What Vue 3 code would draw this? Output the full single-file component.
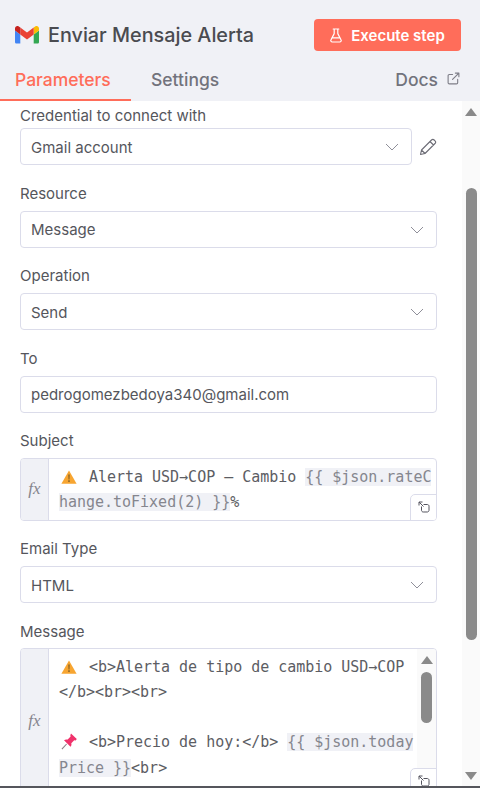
<script setup>
const fields = [
  { label: 'Resource', value: 'Message' },
  { label: 'Operation', value: 'Send' }
]
</script>

<template>
  <div class="panel">
    <header class="head">
      <div class="title-row">
        <svg class="gmail" width="24" height="18" viewBox="0 0 24 18">
          <path d="M1.6 17.5h3.7V8.6L0 4.6v11.3c0 .9.7 1.6 1.6 1.6z" fill="#4285f4" />
          <path d="M18.7 17.5h3.7c.9 0 1.6-.7 1.6-1.6V4.6l-5.3 4z" fill="#34a853" />
          <path d="M18.7 1.6v7L24 4.6V2.4c0-2-2.2-3.1-3.8-1.900z" fill="#fbbc04" />
          <path d="M5.3 8.6v-7L12 6.600l6.700-5v7L12 13.600z" fill="#ea4335" />
          <path d="M0 2.400v2.200l5.300 4v-7L3.800 .5C2.200-.7 0 .4 0 2.400z" fill="#c5221f" />
        </svg>
        <span class="title">Enviar Mensaje Alerta</span>
        <button class="run" type="button">
          <svg width="12" height="15" viewBox="0 0 12 15" fill="none" stroke="#fff" stroke-width="1.200" stroke-linejoin="round" stroke-linecap="round">
            <path d="M3.200 1h5.600M4.200 1v4.600L1 11.800c-.6 1.100.1 2.200 1.300 2.200h7.400c1.200 0 1.900-1.100 1.300-2.200L7.800 5.600V1M2.800 9.800h6.400" />
          </svg>
          Execute step
        </button>
      </div>
      <nav class="tabs">
        <a class="tab on">Parameters</a>
        <a class="tab">Settings</a>
        <a class="docs">
          Docs
          <svg width="13" height="13" viewBox="0 0 14 14" fill="none" stroke="#7d7d87" stroke-width="1.200" stroke-linecap="round" stroke-linejoin="round">
            <path d="M11.500 8v3.500c0 .8-.6 1.300-1.300 1.300H2.500c-.7 0-1.300-.5-1.300-1.300V4c0-.7.600-1.300 1.300-1.300H6M9 1.200h3.800V5M12.800 1.200L6 8" />
          </svg>
        </a>
      </nav>
    </header>

    <div class="body">
      <main class="form">
        <div class="field first">
          <label>Credential to connect with</label>
          <div class="cred">
            <div class="select">
              <span>Gmail account</span>
              <svg class="chev" width="14" height="8" viewBox="0 0 14 8" fill="none" stroke="#8f8f99" stroke-width="1"><path d="M1 1l6 6 6-6" /></svg>
            </div>
            <svg class="pencil" width="18" height="18" viewBox="0 0 18 18" fill="none" stroke="#6d6d76" stroke-width="1.100" stroke-linejoin="round">
              <path d="M1.500 16.500l1-4.500L12.500 2c.8-.8 1.900-.8 2.700 0l.8.800c.8.8.8 1.900 0 2.700L6 15.500zM2.500 12L6 15.500M11 3.500l3.500 3.500" />
            </svg>
          </div>
        </div>

        <div v-for="f in fields" :key="f.label" class="field">
          <label>{{ f.label }}</label>
          <div class="select">
            <span>{{ f.value }}</span>
            <svg class="chev" width="14" height="8" viewBox="0 0 14 8" fill="none" stroke="#8f8f99" stroke-width="1"><path d="M1 1l6 6 6-6" /></svg>
          </div>
        </div>

        <div class="field">
          <label>To</label>
          <div class="select"><span>pedrogomezbedoya340@gmail.com</span></div>
        </div>

        <div class="field">
          <label>Subject</label>
          <div class="expr subject">
            <div class="fx">fx</div>
            <div class="code">
              <div class="ln">
                <svg class="emoji" width="16" height="14" viewBox="0 0 16 14"><path d="M8 .5l7.600 13.200H.4z" fill="#f7a531" /><path d="M7.400 4.500h1.200l-.2 5h-.8zM7.400 10.300h1.200v1.600H7.400z" fill="#6b5326" /></svg><span class="gap">Alerta USD→COP — Cambio <em>{{ '{{ $json.rateC' }}</em></span>
              </div>
              <div class="ln"><em>hange.toFixed(2) }}</em>%</div>
            </div>
            <div class="grip">
              <svg width="12" height="12" viewBox="0 0 12 12" fill="none" stroke="#55555f" stroke-width="1"><path d="M1 4.500V1h3.500M1 1l4.500 4.500M5.500 3.500h3.800c.9 0 1.700.7 1.700 1.700v4.100c0 .9-.8 1.700-1.700 1.700H5.200c-.9 0-1.700-.8-1.700-1.700V5.500" /></svg>
            </div>
          </div>
        </div>

        <div class="field">
          <label>Email Type</label>
          <div class="select">
            <span>HTML</span>
            <svg class="chev" width="14" height="8" viewBox="0 0 14 8" fill="none" stroke="#8f8f99" stroke-width="1"><path d="M1 1l6 6 6-6" /></svg>
          </div>
        </div>

        <div class="field">
          <label>Message</label>
          <div class="expr message">
            <div class="fx">fx</div>
            <div class="code">
              <div class="ln">
                <svg class="emoji" width="16" height="14" viewBox="0 0 16 14"><path d="M8 .5l7.600 13.200H.4z" fill="#f7a531" /><path d="M7.400 4.500h1.200l-.2 5h-.8zM7.400 10.300h1.200v1.600H7.400z" fill="#6b5326" /></svg><span class="gap">&lt;b&gt;Alerta de tipo de cambio USD→COP</span>
              </div>
              <div class="ln">&lt;/b&gt;&lt;br&gt;&lt;br&gt;</div>
              <div class="ln">&nbsp;</div>
              <div class="ln">
                <svg class="emoji pin" width="16" height="17" viewBox="0 0 16 17"><path d="M10 .5l5.800 5.600-1.100 1.300-1.500-.2-2.900 3c.4 1.400.1 2.700-.8 3.600L3 7.300c1-.9 2.300-1.100 3.700-.7l2.900-3-.3-1.400z" fill="#f0326b" /><path d="M5.600 11L.9 16.200" stroke="#8a7f86" stroke-width="1.100" /></svg><span class="gap">&lt;b&gt;Precio de hoy:&lt;/b&gt; <em>{{ '{{ $json.today' }}</em></span>
              </div>
              <div class="ln"><em>Price }}</em>&lt;br&gt;</div>
            </div>
            <div class="mini-bar">
              <i class="up"></i>
              <b></b>
            </div>
            <div class="grip">
              <svg width="12" height="12" viewBox="0 0 12 12" fill="none" stroke="#55555f" stroke-width="1"><path d="M1 4.500V1h3.500M1 1l4.500 4.500M5.500 3.500h3.800c.9 0 1.700.7 1.700 1.700v4.100c0 .9-.8 1.700-1.700 1.700H5.200c-.9 0-1.700-.8-1.700-1.700V5.500" /></svg>
            </div>
          </div>
        </div>
      </main>

      <aside class="bar">
        <i class="up"></i>
        <b></b>
        <i class="down"></i>
      </aside>
    </div>
    <div class="edge"></div>
  </div>
</template>

<style>
html, body { margin: 0; background: #fff; overflow: hidden; }
</style>

<style scoped>
.panel {
  width: 480px;
  height: 788px;
  display: flex;
  flex-direction: column;
  overflow: hidden;
  background: #fff;
  font-family: Inter, "Liberation Sans", sans-serif;
  color: #555;
}

.head {
  flex: none;
  height: 101px;
  background: #f0f1f6;
  display: flex;
  flex-direction: column;
}
.title-row {
  display: flex;
  align-items: center;
  height: 62px;
  padding: 8px 19px 0 15px;
  box-sizing: border-box;
}
.gmail { flex: none; margin-right: 9px; }
.title { flex: 1; font-size: 19.800px; font-weight: 500; color: #4a4b50; }
.run {
  width: 147px;
  height: 32px;
  border: none;
  border-radius: 4px;
  background: #ff6d5a;
  color: #fff;
  font: 600 15px Inter, "Liberation Sans", sans-serif;
  display: flex;
  align-items: center;
  justify-content: center;
  gap: 9px;
  padding: 0;
}

.tabs {
  display: flex;
  align-items: flex-start;
  height: 39px;
  font-size: 17.500px;
  font-weight: 500;
}
.tab {
  height: 37px;
  padding: 7px 20px 0 20px;
  box-sizing: border-box;
  color: #72737c;
}
.tab.on {
  width: 131px;
  padding-left: 15px;
  padding-right: 0;
  color: #ff6d5a;
  border-bottom: 2px solid #ff6d5a;
  height: 39px;
}
.docs {
  margin-left: auto;
  padding: 7px 20px 0 0;
  color: #72737c;
  display: flex;
  gap: 9px;
  align-items: flex-start;
}
.docs svg { margin-top: 3px; }

.body { flex: 1; min-height: 0; display: flex; }
.form { flex: 1; min-width: 0; padding: 4px 25px 0 20px; overflow: hidden; }

.field { margin-top: 17.500px; }
.field.first { margin-top: 0; }
.field.first label { margin-bottom: 1px; }
label {
  display: block;
  font-size: 15px;
  line-height: 22px;
  margin-bottom: 6px;
  color: #55565c;
}
.cred { display: flex; align-items: center; }
.cred .select { flex: 1; }
.pencil { flex: none; margin: 0 0 0 7px; width: 18px; }
.select {
  height: 37px;
  box-sizing: border-box;
  border: 1px solid #dbdcea;
  border-radius: 4px;
  padding: 1px 12px 0 10px;
  display: flex;
  align-items: center;
  justify-content: space-between;
  font-size: 15px;
  color: #55565c;
  background: #fff;
}

.expr {
  position: relative;
  display: flex;
  box-sizing: border-box;
  border: 1px solid #dbdcea;
  border-radius: 4px;
  overflow: hidden;
}
.subject { height: 62.500px; }
.message { height: 147px; margin-top: -1px; }
.fx {
  flex: none;
  width: 27px;
  background: #f0f1f6;
  border-right: 1px solid #dbdcea;
  display: flex;
  align-items: center;
  justify-content: center;
  font: italic 17px "Liberation Serif", serif;
  color: #85858d;
}
.code {
  flex: 1;
  min-width: 0;
  padding: 6px 0 0 10px;
  font-family: "DejaVu Sans Mono", "Liberation Mono", monospace;
  font-size: 15px;
  letter-spacing: -.02px;
  line-height: 25.300px;
  color: #5c5d63;
  white-space: pre;
  overflow: hidden;
}
.ln { height: 25.300px; }
em { font-style: normal; background: #f0f1f6; color: #85868e; }
.emoji { vertical-align: -2px; margin-left: 2px; }
.emoji.pin { vertical-align: -3px; }
.gap { margin-left: 12px; }

.grip {
  position: absolute;
  right: -1px;
  bottom: -1px;
  width: 27px;
  height: 27px;
  box-sizing: border-box;
  border: 1px solid #dbdcea;
  border-top-left-radius: 5px;
  background: #fff;
  display: flex;
  align-items: center;
  justify-content: center;
}

.mini-bar {
  position: absolute;
  top: 0;
  right: 0;
  bottom: 0;
  width: 19px;
  background: #fafafa;
  display: flex;
  flex-direction: column;
  align-items: center;
}
.mini-bar .up { margin-top: 7px; }
.mini-bar b {
  display: block;
  width: 11px;
  height: 51px;
  margin-top: 8px;
  border-radius: 6px;
  background: #8a8a8a;
}
.up {
  display: block;
  width: 0;
  height: 0;
  border-left: 6.500px solid transparent;
  border-right: 6.500px solid transparent;
  border-bottom: 8px solid #8a8a8a;
}
.down {
  display: block;
  width: 0;
  height: 0;
  border-left: 6.500px solid transparent;
  border-right: 6.500px solid transparent;
  border-top: 8px solid #8a8a8a;
}

.bar {
  flex: none;
  width: 18px;
  background: #fafafa;
  position: relative;
  display: flex;
  flex-direction: column;
  align-items: center;
}
.bar .up { margin-top: 7px; }
.bar b {
  display: block;
  width: 11px;
  height: 452px;
  margin-top: 72px;
  border-radius: 6px;
  background: #8a8a8a;
}
.bar .down { position: absolute; bottom: 6px; }

.edge { flex: none; height: 2px; background: #55565c; }
</style>
